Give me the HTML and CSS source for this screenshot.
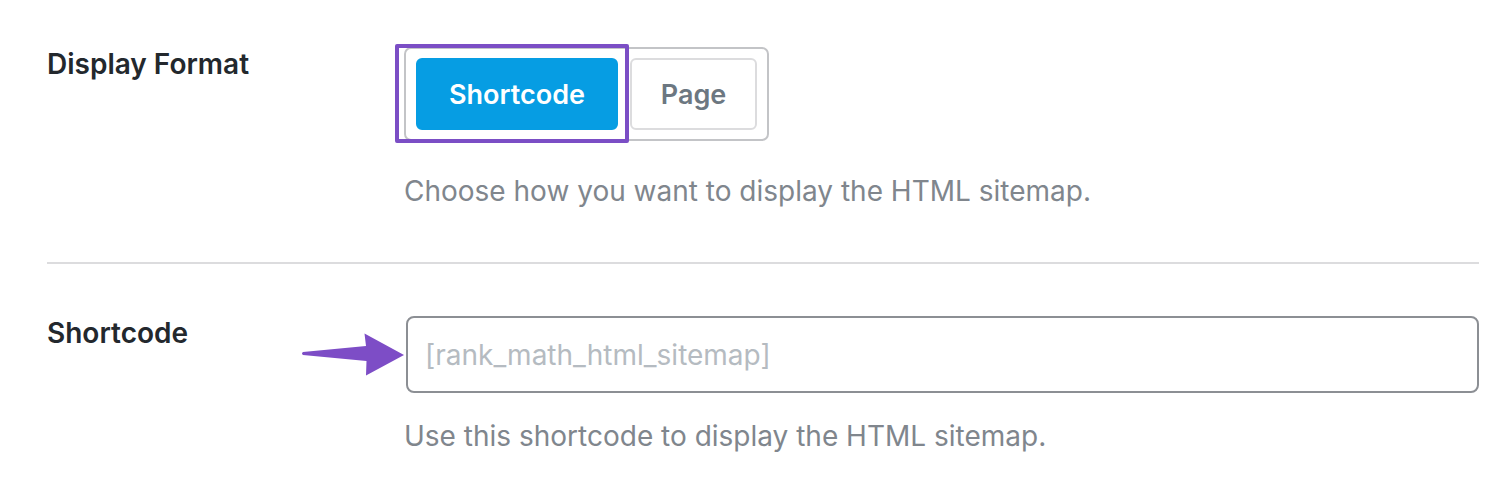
FILE: index.html
```html
<!DOCTYPE html>
<html>
<head>
<meta charset="utf-8">
<link rel="stylesheet" href="styles.css">
</head>
<body>
<div class="settings">
  <div class="row row-first">
    <div class="label">Display Format</div>
    <div class="field">
      <div class="toggle-group">
        <span class="highlight"></span>
        <button class="btn btn-active">Shortcode</button>
        <button class="btn">Page</button>
      </div>
      <p class="desc desc-first">Choose how you want to display the HTML sitemap.</p>
    </div>
  </div>
  <div class="row row-second">
    <div class="label">Shortcode</div>
    <div class="field">
      <div class="input-wrap">
        <svg class="arrow" width="104" height="48" viewBox="0 0 104 48">
          <path d="M1 20 L64 14 L62.5 1.5 L102 23 L64 43.5 L64.5 29 L1 23 Q-1 21.5 1 20 Z" fill="#7d4dc6"/>
        </svg>
        <input class="input" type="text" placeholder="[rank_math_html_sitemap]">
      </div>
      <p class="desc desc-second">Use this shortcode to display the HTML sitemap.</p>
    </div>
  </div>
</div>
</body>
</html>
```
FILE: styles.css
```css
html, body {
  margin: 0;
  padding: 0;
  background: #ffffff;
}
body {
  font-family: Inter, "Noto Sans", sans-serif;
  color: #23282d;
}
.settings {
  padding: 47px 31px 0 47px;
}
.row {
  display: grid;
  grid-template-columns: 357px 1fr;
  align-items: start;
}
.row-first {
  padding-bottom: 54px;
  border-bottom: 2px solid #dcdcde;
}
.row-second {
  padding-top: 52px;
}
.label {
  font-size: 28px;
  font-weight: 600;
  line-height: 34px;
  color: #23282d;
}
.field {
  min-width: 0;
}
.toggle-group {
  position: relative;
  display: inline-flex;
  gap: 12px;
  padding: 9px 10px 9px 10px;
  border: 2px solid #c3c4c7;
  border-radius: 7px;
}
.highlight {
  position: absolute;
  left: -11px;
  top: -5px;
  width: 226px;
  height: 91px;
  border: 4px solid #7b4ec5;
  border-radius: 2px;
  pointer-events: none;
}
.btn {
  font-family: Inter, "Noto Sans", sans-serif;
  font-size: 27px;
  font-weight: 600;
  height: 72px;
  border-radius: 6px;
  border: 2px solid #dcdcde;
  background: #ffffff;
  color: #6c7781;
  padding: 0;
  width: 127px;
}
.btn-active {
  width: 202px;
  background: #069de3;
  border-color: #069de3;
  color: #ffffff;
}
.desc {
  margin: 0;
  font-size: 28px;
  line-height: 34px;
  color: #80868d;
}
.desc-first {
  margin-top: 33px;
}
.desc-second {
  margin-top: 26px;
}
.input-wrap {
  position: relative;
  margin-left: 2px;
}
.arrow {
  position: absolute;
  left: -104px;
  top: 16px;
}
.input {
  display: block;
  box-sizing: border-box;
  width: 100%;
  height: 77px;
  border: 2px solid #8c8f94;
  border-radius: 8px;
  padding: 0 17px;
  font-family: Inter, "Noto Sans", sans-serif;
  font-size: 28px;
  color: #2c3338;
  outline: none;
}
.input::placeholder {
  color: #b5bbc1;
}
```
